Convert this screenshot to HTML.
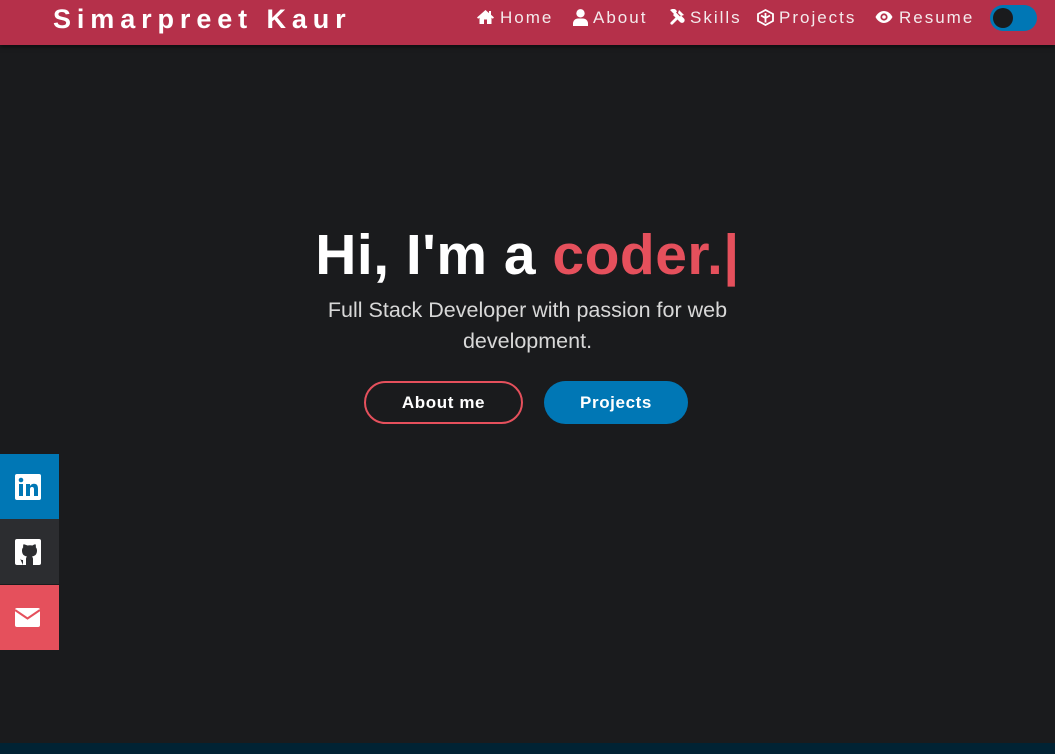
<!DOCTYPE html>
<html><head><meta charset="utf-8"><style>
*{margin:0;padding:0;box-sizing:border-box}
html,body{width:1055px;height:754px;overflow:hidden;background:#1a1b1d;font-family:"Liberation Sans",sans-serif;color:#fff;position:relative}
.nav{position:absolute;left:0;top:0;width:1055px;height:45px;background:#b5304a;box-shadow:0 2px 4px rgba(0,0,0,.5)}
.brand{position:absolute;left:53px;top:4px;font-size:27px;font-weight:bold;letter-spacing:5.9px;color:#fff}
.link{position:absolute;top:8px;font-size:17px;letter-spacing:2px;color:#f4eaec;white-space:nowrap}
.ic{position:absolute;top:9px}
.toggle{position:absolute;left:990px;top:5px;width:47px;height:26px;border-radius:13px;background:#0077b5}
.toggle:after{content:"";position:absolute;left:3px;top:3px;width:20px;height:20px;border-radius:50%;background:#1a1b1d}
h1{position:absolute;left:0;width:1055px;top:222px;text-align:center;font-size:57px;font-weight:bold;letter-spacing:0.5px}
h1 span{color:#e5505c}
.sub{position:absolute;left:290px;width:475px;top:295px;text-align:center;font-size:21.5px;line-height:31px;color:#d8d8d8}
.btn{position:absolute;top:381px;height:43px;border-radius:22px;font-weight:bold;font-size:17px;text-align:center;line-height:39px;letter-spacing:.6px}
.b1{left:364px;width:159px;border:2px solid #e5505c}
.b2{left:544px;width:144px;background:#0077b5;line-height:43px}
.soc{position:absolute;left:0;width:59px;height:65px}
.soc svg{position:absolute;left:15px;top:20px}
.strip{position:absolute;left:0;top:743px;width:1055px;height:11px;background:#012334}
</style></head><body>
<div class="nav">
<div class="brand">Simarpreet Kaur</div>
<svg class="ic" style="left:476px" width="19" height="16" viewBox="0 0 19 16"><path d="M9.5 1L1 8.5l1.2 1.2L3.5 8.6V15h4.5v-4.5h3V15h4.5V8.6l1.3 1.1L18 8.5 15 5.8V2h-2v2.1z" fill="#fff"/></svg>
<div class="link" style="left:500px">Home</div>
<svg class="ic" style="left:573px" width="15" height="17" viewBox="0 0 15 17"><circle cx="7.5" cy="4.3" r="4.2" fill="#fff"/><path d="M0 17v-2.5C0 11.5 2.5 9.5 5 9.5h5c2.5 0 5 2 5 5V17z" fill="#fff"/></svg>
<div class="link" style="left:593px">About</div>
<svg class="ic" style="left:668px" width="17" height="17" viewBox="0 0 17 17"><path d="M2 1l4 4-1 1 2.5 2.5-5 5a1.5 1.5 0 0 0 2 2l5-5L12 13a2.5 2.5 0 0 0 4 -3.5L13 6.5l-1 1-4-4 1-1A4 4 0 0 0 3 .5z" fill="#fff"/><path d="M11 1l5 5-3 1-3-3z" fill="#fff"/></svg>
<div class="link" style="left:690px">Skills</div>
<svg class="ic" style="left:757px" width="17" height="17" viewBox="0 0 17 17"><path d="M8.5 1L16 5v7l-7.5 4L1 12V5zM8.5 4v4M4 6.5l4.5 2.5 4.5-2.5M8.5 9v4.5" fill="none" stroke="#fff" stroke-width="1.8"/></svg>
<div class="link" style="left:779px">Projects</div>
<svg class="ic" style="left:875px;top:10px" width="18" height="14" viewBox="0 0 18 14"><path d="M9 1C5 1 2 4 .5 7 2 10 5 13 9 13s7-3 8.5-6C16 4 13 1 9 1z" fill="#fff"/><circle cx="9" cy="7" r="3.6" fill="#b5304a"/><circle cx="9" cy="7" r="1.8" fill="#fff"/></svg>
<div class="link" style="left:899px">Resume</div>
<div class="toggle"></div>
</div>
<h1>Hi, I'm a <span>coder.|</span></h1>
<div class="sub">Full Stack Developer with passion for web development.</div>
<div class="btn b1">About me</div>
<div class="btn b2">Projects</div>
<div class="soc" style="top:454px;background:#0077b5"><svg width="26" height="26" viewBox="0 0 26 26"><rect width="26" height="26" rx="2" fill="#fff"/><rect x="4" y="10" width="4" height="12" fill="#0077b5"/><circle cx="6" cy="6" r="2.3" fill="#0077b5"/><path d="M11 10h4v2c1-1.6 2.5-2.3 4-2.3 3 0 4 2 4 5V22h-4v-6.5c0-1.5-.5-2.5-2-2.5s-2 1-2 2.5V22h-4z" fill="#0077b5"/></svg></div>
<div class="soc" style="top:519px;background:#2c2d30"><svg width="26" height="26" viewBox="0 0 26 26"><rect width="26" height="26" rx="2" fill="#fff"/><path d="M8 26v-5c-2 0-3-1-3.5-2.5M18 26v-6c0-1-.5-2-1-2.5 3-.5 5-2 5-6 0-1.2-.4-2.3-1.2-3.2.2-1 .1-2-.3-3-1 0-2 .5-3 1.2a11 11 0 0 0-5 0C10.5 5.8 9.5 5.3 8.5 5.3c-.4 1-.5 2-.3 3C7.4 9.2 7 10.3 7 11.5c0 4 2 5.5 5 6-.5.5-1 1.2-1 2.5V26z" fill="#2c2d30"/></svg></div>
<div class="soc" style="top:585px;background:#e5505c"><svg width="25" height="20" viewBox="0 0 25 20" style="top:23px"><rect y="0" width="25" height="19" rx="2" fill="#fff"/><path d="M0 2l12.5 8.5L25 2" fill="none" stroke="#e5505c" stroke-width="2"/></svg></div>
<div class="strip"></div>
</body></html>
